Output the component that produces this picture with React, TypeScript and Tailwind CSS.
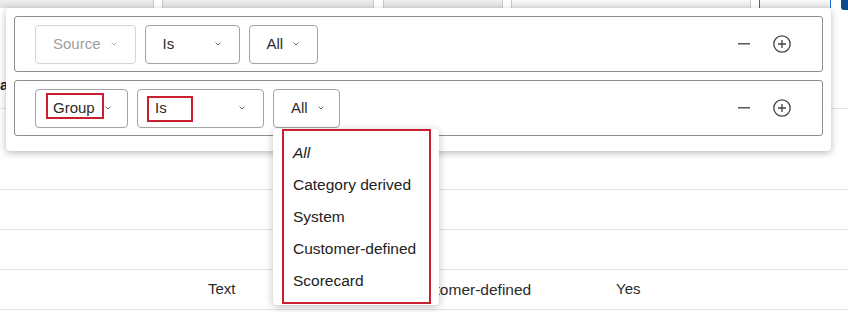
import type { ReactNode } from "react";

const font = { fontFamily: '"Liberation Sans", Arial, sans-serif' };

function Chevron({ color = "#666" }: { color?: string }) {
  return (
    <svg width="6" height="4" viewBox="0 0 6 4" className="shrink-0">
      <polyline points="0.6,0.6 3,3 5.4,0.6" fill="none" stroke={color} strokeWidth="1" />
    </svg>
  );
}

function Select({
  label,
  width,
  disabled,
  children,
}: {
  label: string;
  width?: string;
  disabled?: boolean;
  children?: ReactNode;
}) {
  return (
    <div
      className={`relative flex h-[39px] items-center justify-between gap-[10px] rounded-[4px] border bg-white pl-[17px] pr-[18px] text-[15px] ${
        disabled ? "border-[#d4d4d4] text-[#a0a0a0]" : "border-[#a3a3a3] text-[#2b2b2b]"
      } ${width ?? ""}`}
    >
      <span>{label}</span>
      <Chevron color={disabled ? "#b0b0b0" : "#666"} />
      {children}
    </div>
  );
}

function RowActions() {
  return (
    <div className="ml-auto mr-[31px] flex items-center gap-[23px]">
      <svg width="12" height="2" viewBox="0 0 12 2">
        <rect width="12" height="1.5" fill="#555" />
      </svg>
      <svg width="18" height="18" viewBox="0 0 18 18">
        <circle cx="9" cy="9" r="8.2" fill="none" stroke="#444" strokeWidth="1.3" />
        <path d="M9 5v8M5 9h8" stroke="#444" strokeWidth="1.3" />
      </svg>
    </div>
  );
}

const options = ["All", "Category derived", "System", "Customer-defined", "Scorecard"];

export default function App() {
  return (
    <div className="relative h-[312px] w-[848px] overflow-hidden bg-white text-[#2b2b2b]" style={font}>
      {/* table behind the popup */}
      <div className="flex h-[8px]">
        <div className="w-[154px] border-r border-[#c8c8c8] bg-gradient-to-b from-[#efefef] to-[#dedede]" />
        <div className="w-[8px]" />
        <div className="w-[212px] border-x border-[#c8c8c8] bg-gradient-to-b from-[#efefef] to-[#dedede]" />
        <div className="w-[9px]" />
        <div className="w-[121px] border-x border-[#c8c8c8] bg-gradient-to-b from-[#efefef] to-[#dedede]" />
        <div className="w-[8px]" />
        <div className="w-[240px] border-x border-[#c8c8c8] bg-gradient-to-b from-[#fafafa] to-[#e6e6e6]" />
        <div className="w-[8px]" />
        <div className="w-[72px] border-x border-[#1a6fd1] bg-gradient-to-b from-[#fafafa] to-[#e6e6e6]" />
        <div className="w-[10px]" />
        <div className="h-[10px] w-[7px] rounded-bl-[3px] bg-[#0b4a8f]" />
      </div>
      <div className="flex h-[101px] items-end border-b border-[#e3e3e3] pb-[12px]">
        <span className="text-[15px] font-bold text-[#222]">a</span>
      </div>
      <div className="h-[81px] border-b border-[#e3e3e3]" />
      <div className="h-[40px] border-b border-[#e3e3e3]" />
      <div className="h-[40px] border-b border-[#e3e3e3]" />
      <div className="flex h-[40px] items-center border-b border-[#e3e3e3] text-[15px]">
        <span className="ml-[208px] w-[200px]">Text</span>
        <span className="w-[208px] text-[15.5px]">Customer-defined</span>
        <span>Yes</span>
      </div>

      {/* filter popup */}
      <div className="absolute left-[6px] top-[8px] flex w-[825px] flex-col gap-[8px] rounded-[4px] bg-white px-[8px] pb-[15px] pt-[8px] shadow-[0_2px_7px_rgba(0,0,0,0.28)]">
        <div className="flex h-[56px] items-center gap-[9px] rounded-[3px] border border-[#8c8c8c] pl-[20px]">
          <Select label="Source" disabled />
          <Select label="Is" width="w-[95px]" />
          <Select label="All" />
          <RowActions />
        </div>
        <div className="flex h-[56px] items-center gap-[9px] rounded-[3px] border border-[#8c8c8c] pl-[20px]">
          <Select label="Group" width="w-[93px]">
            <span className="absolute left-[10px] top-[3px] h-[26px] w-[58px] border-[2.5px] border-[#c8202f]" />
          </Select>
          <Select label="Is" width="w-[127px]">
            <span className="absolute left-[9px] top-[6px] h-[26px] w-[46px] border-[2.5px] border-[#c8202f]" />
          </Select>
          <Select label="All" width="w-[67px]" />
          <RowActions />
        </div>
      </div>

      {/* open dropdown menu */}
      <div className="absolute left-[273px] top-[129px] w-[166px] rounded-[4px] bg-white py-[8px] shadow-[0_2px_8px_rgba(0,0,0,0.25)]">
        <span className="absolute left-[9px] top-0 h-[175px] w-[149px] border-[2.5px] border-[#c8202f]" />
        {options.map((o, i) => (
          <div
            key={o}
            className={`flex h-[32px] items-center pl-[20px] text-[15.5px] text-[#222] ${i === 0 ? "italic" : ""}`}
          >
            {o}
          </div>
        ))}
      </div>
    </div>
  );
}
